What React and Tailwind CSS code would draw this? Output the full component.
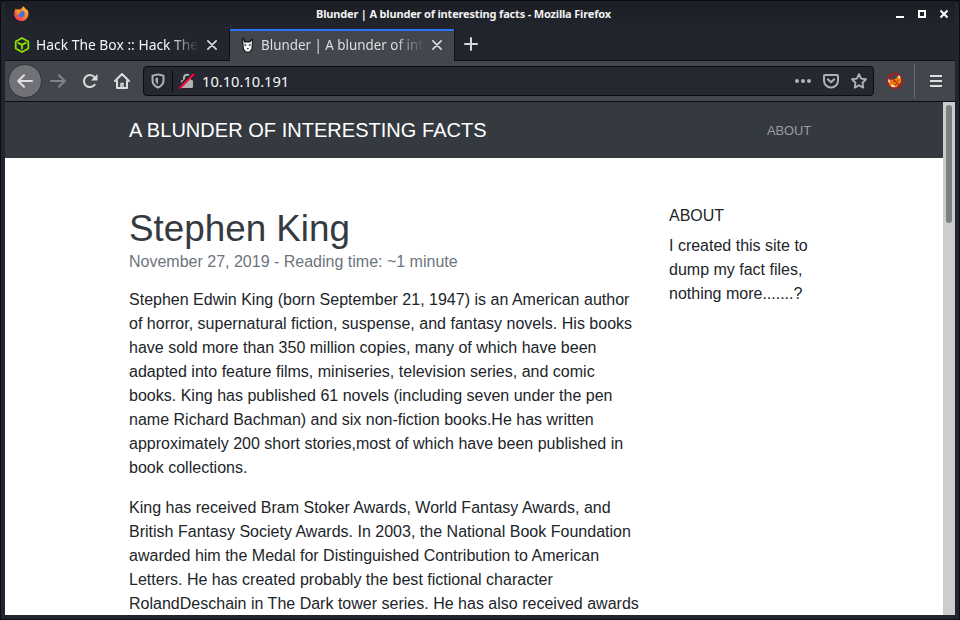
import React from "react";

const UI = "font-['Noto_Sans',sans-serif]";

const first = [
  "Stephen Edwin King (born September 21, 1947) is an American author",
  "of horror, supernatural fiction, suspense, and fantasy novels. His books",
  "have sold more than 350 million copies, many of which have been",
  "adapted into feature films, miniseries, television series, and comic",
  "books. King has published 61 novels (including seven under the pen",
  "name Richard Bachman) and six non-fiction books.He has written",
  "approximately 200 short stories,most of which have been published in",
  "book collections.",
];
const second = [
  "King has received Bram Stoker Awards, World Fantasy Awards, and",
  "British Fantasy Society Awards. In 2003, the National Book Foundation",
  "awarded him the Medal for Distinguished Contribution to American",
  "Letters. He has created probably the best fictional character",
  "RolandDeschain in The Dark tower series. He has also received awards",
];
const about = ["I created this site to", "dump my fact files,", "nothing more.......?"];

function Lines({ lines }) {
  return (
    <p>
      {lines.map((l) => (
        <span key={l} className="block whitespace-nowrap">{l}</span>
      ))}
    </p>
  );
}

function FirefoxLogo() {
  return (
    <svg className="mb-px block h-[15px] w-[15px] shrink-0" viewBox="0 0 16 16">
      <defs>
        <linearGradient id="fx" x1="1" y1="0" x2="0.2" y2="1">
          <stop offset="0" stopColor="#ffe14a" />
          <stop offset="0.45" stopColor="#ff8a25" />
          <stop offset="1" stopColor="#f0305c" />
        </linearGradient>
      </defs>
      <path fill="url(#fx)" d="M9.6.2c1.500.9 2.300 2 2.700 3 .9.500 1.600.8 2.200 1.400C16 8 15.700 11.200 13.500 13.500 11.500 15.500 9.500 16 8 16c-4.200 0-7.600-3-7.800-7.300C.1 6 1 4 2.200 2.300c.1 1 .4 1.400.7 1.600 1-.5 1.800-.4 2.700-.2C6.500 3.500 8.800 3 9.600.2z" />
      <circle cx="7.700" cy="8.300" r="3.600" fill="#3f70e8" />
      <path fill="#ff9226" d="M2.800 4.300c1.600-.7 3-.3 4 .7.900.2 1.400.5 1.300 1C7.600 6.800 6.300 6.600 5.700 7.600c-.5.900.2 1.400 1.100 1.300-1 .9-2.800.5-3.800-.9z" />
    </svg>
  );
}

function BoxLogo() {
  return (
    <svg className="block h-4 w-4 shrink-0" viewBox="0 0 16 16" fill="none" stroke="#8fe000" strokeWidth="1.8" strokeLinejoin="round" strokeLinecap="round">
      <path d="M8 1l6.300 3.500v7L8 15l-6.300-3.500v-7zM4.300 5.900L8 7.900l3.700-2M8 8v3.700" />
    </svg>
  );
}

function DogIcon() {
  return (
    <svg className="block h-4 w-4 shrink-0" viewBox="0 0 16 16">
      <path fill="#17181c" d="M3 .8h2l1.500 3.500h4L12 1.800h1.800v6l-.5 5L11 15.500H6.500L4 12.500 3.400 8z" />
      <path fill="#f7f7f7" d="M4 2l1.200 3.500h6L12.800 3.200v4.800l-.5 4L10.500 14.500H7L5 12z" />
      <path fill="#17181c" d="M5.300 7.200l1.900.3v1.300H5.700zM11.800 7.200l-1.900.3v1.300h1.600zM7.900 11.200h1.800v1.100H7.900z" />
    </svg>
  );
}

function Cross() {
  return (
    <svg className="block h-[10px] w-[10px] shrink-0" viewBox="0 0 10 10" fill="none" stroke="#d7d7da" strokeWidth="1.700" strokeLinecap="round">
      <path d="M.9.9l8.200 8.200M9.100.9L.9 9.100" />
    </svg>
  );
}

function FoxyProxy() {
  return (
    <svg className="block h-4 w-4 shrink-0" viewBox="0 0 16 16">
      <path fill="#e98410" d="M1.500 8.500L3.500 7 9 5.500 11.500 2l1.800 2 1 4-1.800 3.500-3.500 3-4.500-.5-2.500-2.500z" />
      <path fill="#f4f0e8" d="M1 5l2 2-.8 3L1 9zM11 2.500l2-.7.7 2.700-1.500 1.300zM3.300 12l3 .1 2 2-3 .4z" />
      <path fill="#71380a" d="M6 8l1.200.3v1.200L6 9zM10 6.600l1.500 1-1 .7zM8 11h1.500v1H8z" />
      <circle cx="8" cy="8" r="7.400" fill="none" stroke="#d30b0b" strokeWidth="1.100" />
      <path d="M2.900 2.900l10.200 10.200" stroke="#d30b0b" strokeWidth="1.100" />
    </svg>
  );
}

function TitleBar() {
  return (
    <div className="flex h-[29px] shrink-0 items-center bg-linear-to-b from-[#1c1e25] to-[#23252e] pr-[7px] pb-px pl-[9px]">
      <FirefoxLogo />
      <div className={`${UI} ml-[287px] text-[11px] leading-[26px] font-bold tracking-[-0.17px] whitespace-nowrap text-[#f2f2f2]`}>
        Blunder | A blunder of interesting facts - Mozilla Firefox
      </div>
      <svg className="ml-auto block h-[10px] w-[53px]" viewBox="0 0 53 10" fill="none" stroke="#fff">
        <path d="M1 8h8" strokeWidth="2" />
        <path d="M24 2h6v6h-6z" strokeWidth="2" />
        <path d="M45.500 1.500l7 7M52.500 1.500l-7 7" strokeWidth="2" />
      </svg>
    </div>
  );
}

function TabLabel({ scale, children }) {
  return (
    <div className="ml-[6px] w-[163px] shrink-0 pb-[2px] mask-r-from-[82%] whitespace-nowrap">
      <div className={`w-max origin-left ${scale}`}>{children}</div>
    </div>
  );
}

function Tabs() {
  return (
    <div className={`${UI} flex h-8 shrink-0 text-[14.670px] leading-[26px] text-[#f5f5f7]`}>
      <div className="flex w-[225px] items-center border-r border-b border-[#101116] pl-[9px]">
        <BoxLogo />
        <TabLabel scale="scale-x-[0.945]">Hack The Box :: Hack The</TabLabel>
        <div className="ml-2"><Cross /></div>
      </div>
      <div className="flex w-56 items-center border-t-2 border-[#2c74f5] bg-[#43464d] pb-[2px] pl-[9px]">
        <DogIcon />
        <div className="text-[#dedfe1]"><TabLabel scale="scale-x-[0.913]">Blunder | A blunder of int</TabLabel></div>
        <div className="ml-2"><Cross /></div>
      </div>
      <div className="flex flex-1 items-center border-b border-l border-[#101116] pb-px pl-[9px]">
        <svg className="block h-[14px] w-[14px]" viewBox="0 0 14 14" stroke="#d7d7da" strokeWidth="2" strokeLinecap="round"><path d="M7 1v12M1 7h12" /></svg>
      </div>
    </div>
  );
}

function Toolbar() {
  return (
    <div className="flex h-[41px] shrink-0 items-center border-b border-[#0c0d11] bg-[#43464d]">
      <div className="ml-[3px] flex h-[34px] w-[34px] shrink-0 items-center justify-center rounded-full border border-[#303238] bg-[#707277]">
        <svg className="block h-4 w-4" viewBox="0 0 16 16" fill="none" stroke="#e1e1e3" strokeWidth="2" strokeLinecap="round" strokeLinejoin="round"><path d="M15 8H1.500M7 2.200L1.200 8 7 13.800" /></svg>
      </div>
      <svg className="ml-[8px] block h-4 w-4 shrink-0" viewBox="0 0 16 16" fill="none" stroke="#818388" strokeWidth="2" strokeLinecap="round" strokeLinejoin="round"><path d="M1 8h13.500M9 2.200L14.800 8 9 13.800" /></svg>
      <svg className="ml-4 block h-4 w-4 shrink-0" viewBox="0 0 16 16" fill="none" stroke="#dddddf" strokeWidth="2" strokeLinecap="round"><path d="M12.700 11.700a6 6 0 1 1 .2-7" /><path d="M15.500 1v6.500H9z" fill="#dddddf" stroke="none" /></svg>
      <svg className="ml-4 block h-4 w-4 shrink-0" viewBox="0 0 16 16" fill="none" stroke="#dddddf" strokeWidth="2" strokeLinecap="round" strokeLinejoin="round"><path d="M1 8l7-7 7 7M3 8v7h10V8" /><path d="M7 15v-4.500h2V15" strokeWidth="1.500" /></svg>
      <div className="ml-[13px] flex h-[30px] w-[731px] shrink-0 items-center rounded-[4px] border border-[#0b0c10] bg-[#252731]">
        <svg className="ml-[6px] block h-4 w-4 shrink-0" viewBox="0 0 16 16" fill="none" stroke="#b0b1b5" strokeWidth="2" strokeLinejoin="round"><path d="M8 1.400l5.500 1.300v4.500c0 3.400-2.300 6-5.500 7.300-3.200-1.300-5.500-3.900-5.500-7.300V2.700z" /><path d="M8 4.500v7C6.300 10.400 5.500 9 5.500 7V5z" fill="#b0b1b5" stroke="none" /></svg>
        <div className="ml-[6px] h-[22px] w-px bg-[#0b0c10]" />
        <svg className="ml-[6px] block h-4 w-4 shrink-0" viewBox="0 0 16 16" fill="none"><path d="M5 8V4.700a3 3 0 0 1 6 0V8" stroke="#b0b1b5" strokeWidth="2" /><rect x="2" y="7" width="12" height="8" rx="1.200" fill="#b0b1b5" /><path d="M0 13.500L13 .5" stroke="#252731" strokeWidth="2" /><path d="M1.300 14.700L14.500 1.500" stroke="#ff0039" strokeWidth="2" strokeLinecap="round" /></svg>
        <div className={`${UI} ml-[7px] text-[14.670px] leading-[28px] text-[#f7f7f8]`}>10.10.10.191</div>
        <div className="mr-[6px] ml-auto flex gap-3">
          <svg className="block h-4 w-4" viewBox="0 0 16 16" fill="#b0b1b5"><circle cx="2" cy="8" r="2" /><circle cx="8" cy="8" r="2" /><circle cx="14" cy="8" r="2" /></svg>
          <svg className="block h-4 w-4" viewBox="0 0 16 16" fill="none" stroke="#b0b1b5" strokeWidth="2" strokeLinecap="round" strokeLinejoin="round"><path d="M2 2h12a1 1 0 0 1 1 1v4.500a7 7 0 0 1-14 0V3a1 1 0 0 1 1-1z" /><path d="M4.800 6.300L8 9.300l3.200-3" /></svg>
          <svg className="block h-4 w-4" viewBox="0 0 16 16" fill="none" stroke="#b0b1b5" strokeWidth="1.900" strokeLinejoin="round"><path d="M8 1.200l2.100 4.400 4.900.7-3.500 3.400.8 4.900L8 12.300l-4.300 2.300.8-4.900L1 6.300l4.900-.7z" /></svg>
        </div>
      </div>
      <div className="ml-[13px]"><FoxyProxy /></div>
      <div className="ml-[11px] h-[34px] w-px bg-[#696b70]" />
      <svg className="ml-[15px] block h-3 w-3 shrink-0" viewBox="0 0 12 12" stroke="#dddddf" strokeWidth="2"><path d="M0 1h12M0 6h12M0 11h12" /></svg>
    </div>
  );
}

function Page() {
  return (
    <div className="flex min-h-0 flex-1 bg-white font-['Liberation_Sans',Arial,sans-serif] text-[#212529]">
      <main className="min-w-0 flex-1 overflow-hidden">
        <header className="flex h-14 items-center justify-between bg-[#343a40] pr-[132px] pl-[124px]">
          <span className="text-[20px] tracking-[0.03px] text-white">A BLUNDER OF INTERESTING FACTS</span>
          <span className="pt-px text-[12.8px] text-[#999da0]">ABOUT</span>
        </header>
        <div className="flex pl-[124px]">
          <article className="w-[540px] shrink-0 pt-[50px] leading-6">
            <h1 className="text-[36.8px] leading-[42px] text-[#343a40]">Stephen King</h1>
            <div className="text-[#6c757d]">November 27, 2019 - Reading time: ~1 minute</div>
            <div className="mt-[14px] flex flex-col gap-4 tracking-[0.008px]">
              <Lines lines={first} />
              <Lines lines={second} />
            </div>
          </article>
          <aside className="pt-[46px] leading-6">
            <h2 className="mb-[6px]">ABOUT</h2>
            <Lines lines={about} />
          </aside>
        </div>
      </main>
      <div className="w-3 shrink-0 bg-[#cdcdcd] px-[3px] pt-[3px]">
        <div className="h-[118px] rounded-full bg-[#7d8080]" />
      </div>
    </div>
  );
}

export default function App() {
  return (
    <div className="h-[620px] w-[960px] overflow-hidden bg-[#0b1322]">
      <div className="flex h-full flex-col overflow-hidden rounded-t-[4px] border border-[#0b0c11] bg-[#23252e]">
        <div className="-mt-px flex min-h-0 flex-1 flex-col px-1 pb-1">
          <TitleBar />
          <Tabs />
          <Toolbar />
          <Page />
        </div>
      </div>
    </div>
  );
}
